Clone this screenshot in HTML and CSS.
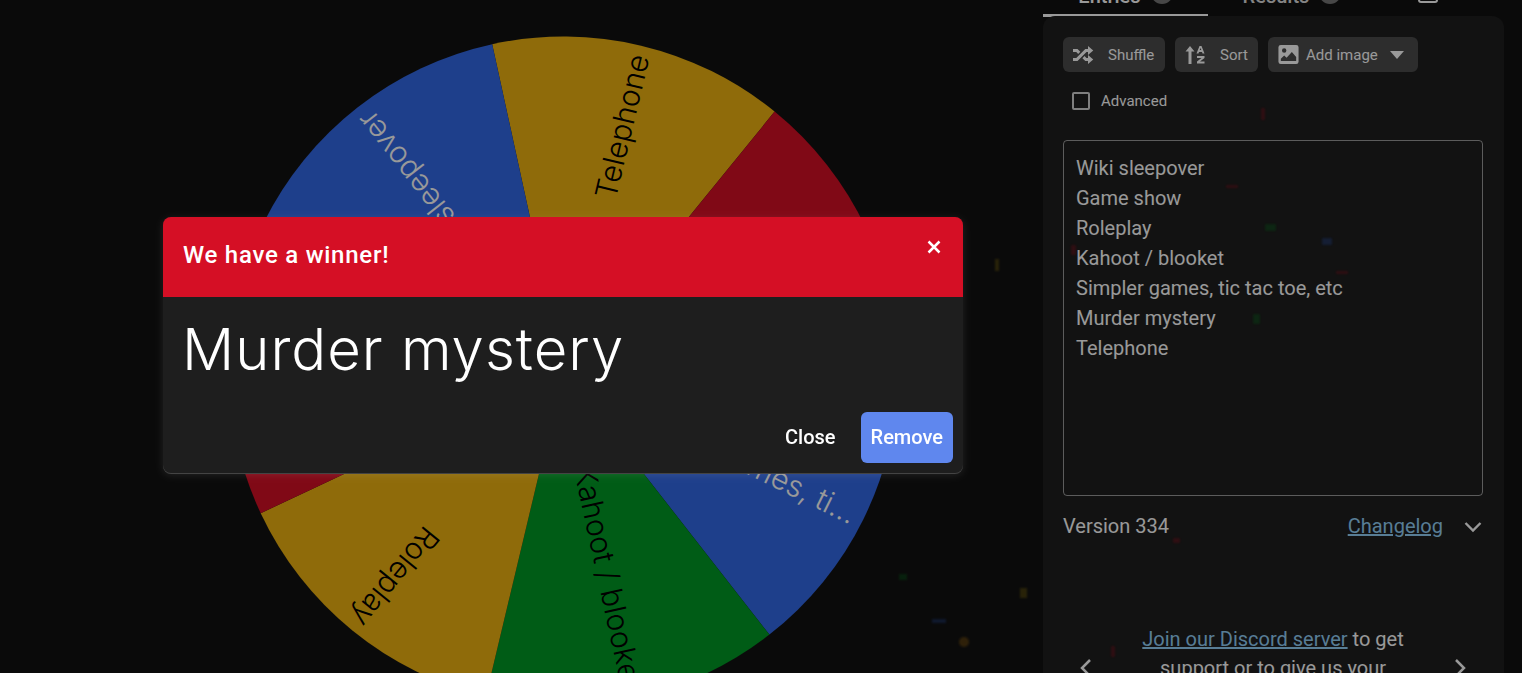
FILE: index.html
```html
<!DOCTYPE html>
<html lang="en">
<head>
<meta charset="utf-8">
<title>Wheel of Names</title>
<link rel="stylesheet" href="styles.css">
</head>
<body>
<div class="page">
  <main class="wheel-col">
    <svg class="wheel" viewBox="-563.5 -403 1043 760" width="1043" height="760" aria-label="Wheel">
      <path class="s-gold" d="M0 0L-71.3 -326.8A334.5 334.5 0 0 1 211.1 -259.4Z"/>
      <path class="s-red" d="M0 0L211.1 -259.4A334.5 334.5 0 0 1 334.5 3.3Z"/>
      <path class="s-blue" d="M0 0L334.5 3.3A334.5 334.5 0 0 1 205.9 263.6Z"/>
      <path class="s-green" d="M0 0L205.9 263.6A334.5 334.5 0 0 1 -77.6 325.4Z"/>
      <path class="s-gold" d="M0 0L-77.6 325.4A334.5 334.5 0 0 1 -302.8 142.2Z"/>
      <path class="s-red" d="M0 0L-302.8 142.2A334.5 334.5 0 0 1 -300 -148Z"/>
      <path class="s-blue" d="M0 0L-300 -148A334.5 334.5 0 0 1 -71.3 -326.8Z"/>
      <text class="w-text" transform="rotate(-76.6)" x="325" y="0">Telephone</text>
      <text class="w-text" transform="rotate(-25.15)" x="325" y="0">Murder mystery</text>
      <text class="w-text w-light" transform="rotate(26.3)" x="325" y="0">Simpler games, ti...</text>
      <text class="w-text" transform="rotate(77.7)" x="325" y="0">Kahoot / blooket</text>
      <text class="w-text" transform="rotate(129.1)" x="325" y="0">Roleplay</text>
      <text class="w-text" transform="rotate(180.55)" x="325" y="0">Game show</text>
      <text class="w-text w-light" transform="rotate(232)" x="325" y="0">Wiki sleepover</text>
    </svg>
  </main>

  <aside class="side">
    <div class="tabs">
      <div class="tab tab-active"><span>Entries</span><span class="badge">7</span></div>
      <div class="tab tab-results"><span>Results</span><span class="badge">0</span></div>
      <div class="tab tab-icon"><svg class="tab-glyph" viewBox="0 0 20 20"><rect x="1" y="1" width="18" height="18" rx="2"/></svg></div>
    </div>
    <section class="card">
      <div class="toolbar">
        <button class="btn btn-shuffle"><svg class="ico" viewBox="0 0 24 24"><path d="M17 3L22.25 7.5L17 12L22.25 16.5L17 21V18H14.26L11.44 15.18L13.56 13.06L15.5 15H17V9H15.5L6.5 18H2V15H5.26L14.26 6H17V3M2 6H6.5L9.32 8.82L7.2 10.94L5.26 9H2V6Z"/></svg><span>Shuffle</span></button>
        <button class="btn btn-sort"><svg class="ico" viewBox="0 0 20 20"><path d="M5 1L9.500 6.500H6.500V19H3.500V6.500H.5ZM11.500 8.500L14.500 1H16.500L19.500 8.500H17.500L17 7H14L13.500 8.500ZM14.700 5H16.300L15.500 3ZM12 11H19.500V13L15 16.500H19.500V18.500H12V16.500L16.500 13H12Z" fill-rule="evenodd"/></svg><span>Sort</span></button>
        <button class="btn btn-image"><svg class="ico" viewBox="0 0 24 24"><path fill-rule="evenodd" d="M4 2H20A2.5 2.5 0 0 1 22.500 4.500V19.500A2.500 2.500 0 0 1 20 22H4A2.500 2.500 0 0 1 1.500 19.500V4.500A2.500 2.500 0 0 1 4 2ZM7.500 5.500A2.300 2.300 0 1 0 7.500 10.100A2.300 2.300 0 1 0 7.500 5.500ZM4 18.800H20V14.500L15.500 9.500L10 15.500L7.500 13L4 16.500Z"/></svg><span>Add image</span><svg class="caret" viewBox="0 0 14 8"><path d="M0 0H14L7 8Z"/></svg></button>
      </div>
      <label class="advanced"><span class="check"></span><span>Advanced</span></label>
      <div class="entries">
        <div>Wiki sleepover</div>
        <div>Game show</div>
        <div>Roleplay</div>
        <div>Kahoot / blooket</div>
        <div>Simpler games, tic tac toe, etc</div>
        <div>Murder mystery</div>
        <div>Telephone</div>
      </div>
      <div class="version">
        <span class="version-no">Version 334</span>
        <a class="link" href="#">Changelog</a>
        <svg class="chev" viewBox="0 0 18 12"><path d="M1.500 2L9 9.500L16.500 2"/></svg>
      </div>
      <div class="promo">
        <svg class="arrow" viewBox="0 0 12 20"><path d="M10 2L2 10L10 18"/></svg>
        <p class="promo-text"><a class="link" href="#">Join our Discord server</a> to get support or to give us your feedback</p>
        <svg class="arrow" viewBox="0 0 12 20"><path d="M2 2L10 10L2 18"/></svg>
      </div>
    </section>
  </aside>
</div>

<div class="confetti">
  <i class="bit c-y" style="left:995px;top:259px;width:4px;height:12px"></i>
  <i class="bit c-y" style="left:1020px;top:588px;width:7px;height:10px"></i>
  <i class="bit c-o" style="left:959px;top:637px;width:10px;height:10px"></i>
  <i class="bit c-b" style="left:932px;top:619px;width:14px;height:4px"></i>
  <i class="bit c-g" style="left:899px;top:574px;width:8px;height:6px"></i>
  <i class="bit c-r" style="left:1226px;top:185px;width:12px;height:3px"></i>
  <i class="bit c-g" style="left:1265px;top:224px;width:11px;height:7px"></i>
  <i class="bit c-b" style="left:1322px;top:238px;width:10px;height:7px"></i>
  <i class="bit c-r" style="left:1336px;top:271px;width:12px;height:3px"></i>
  <i class="bit c-g" style="left:1253px;top:314px;width:7px;height:10px"></i>
  <i class="bit c-r" style="left:1071px;top:245px;width:5px;height:10px"></i>
  <i class="bit c-r" style="left:1261px;top:108px;width:4px;height:12px"></i>
  <i class="bit c-r" style="left:1173px;top:538px;width:7px;height:5px"></i>
  <i class="bit c-r" style="left:1111px;top:646px;width:4px;height:11px"></i>
</div>

<div class="scrim"></div>

<div class="dialog" role="dialog">
  <header class="dialog-head">
    <h2 class="dialog-title">We have a winner!</h2>
    <svg class="dialog-x" viewBox="0 0 14 14"><path d="M1.500 1.500L12.500 12.500M12.500 1.500L1.500 12.500"/></svg>
  </header>
  <div class="dialog-body">Murder mystery</div>
  <footer class="dialog-foot">
    <button class="d-btn">Close</button>
    <button class="d-btn d-primary">Remove</button>
  </footer>
</div>
</body>
</html>
```
FILE: styles.css
```css
* { box-sizing: border-box; }
html, body { margin: 0; height: 100%; overflow: hidden; background: #121212; }
body { font-family: Roboto, "Liberation Sans", sans-serif; color: #fff; }

.page { display: grid; grid-template-columns: 1043px 461px; margin-top: -32px; height: 705px; overflow: hidden; }

.wheel-col { height: 705px; overflow: hidden; }
.wheel { display: block; }
.s-gold { fill: #eeb211; }
.s-red { fill: #d50f25; }
.s-blue { fill: #3369e8; }
.s-green { fill: #009925; }
.w-text { font-family: Inter, sans-serif; font-size: 30px; font-weight: 300; fill: #000; text-anchor: end; dominant-baseline: central; }
.w-light { fill: #fff; }

.side { display: flex; flex-direction: column; }
.tabs { display: flex; height: 49px; }
.tab { width: 165px; height: 49px; display: flex; align-items: flex-end; justify-content: center; gap: 10px; font-size: 20px; line-height: 23px; font-weight: 500; color: #ddd; padding-bottom: 6px; border-bottom: 3px solid transparent; }
.tab-active { border-bottom-color: #fff; color: #fff; }
.tab-results { padding-left: 3px; }
.tab-icon { width: 110px; }
.tab-glyph { width: 20px; height: 20px; margin-bottom: 5px; fill: none; stroke: #fff; stroke-width: 2; }
.badge { width: 22px; height: 22px; margin-bottom: 4px; border-radius: 50%; background: #777; font-size: 13px; line-height: 22px; text-align: center; }

.card { background: #1e1e1e; border-radius: 12px; margin-top: -1px; padding: 21px 21px 0 20px; height: 720px; }
.toolbar { display: flex; gap: 10px; }
.btn { height: 35px; border: 0; border-radius: 6px; background: #4b4b4b; color: #fff; display: flex; align-items: center; font-family: inherit; font-size: 15px; font-weight: 400; padding: 0 10px; }
.btn-shuffle { width: 102px; gap: 13px; }
.btn-sort { width: 83px; gap: 15px; }
.btn-image { width: 150px; gap: 6px; }
.ico { width: 20px; height: 20px; fill: #fff; flex: none; }
.btn-shuffle .ico { width: 24px; height: 24px; margin-left: -2px; }
.btn-image .ico { width: 23px; height: 23px; margin-left: -1px; }
.caret { width: 14px; height: 8px; fill: #fff; margin-left: 6px; }
.advanced { display: flex; align-items: center; gap: 11px; font-size: 15px; margin: 20px 0 0 9px; height: 18px; }
.check { width: 18px; height: 18px; border: 2px solid #fff; border-radius: 2px; opacity: .8; }

.entries { margin-top: 30px; height: 356px; border: 1px solid rgba(255,255,255,.55); border-radius: 4px; padding: 12px; font-size: 20px; line-height: 30px; }

.version { display: flex; align-items: center; height: 30px; margin-top: 15px; padding-right: 1px; font-size: 20px; }
.version-no { flex: 1; }
.link { color: #93d0f8; text-decoration: underline; }
.chev { width: 18px; height: 12px; margin: 2px 0 0 21px; fill: none; stroke: #fff; stroke-width: 2.400; }

.promo { display: flex; align-items: flex-start; justify-content: space-between; margin-top: 84px; padding: 0 17px; }
.promo-text { width: 300px; margin: 0; text-align: center; font-size: 20px; line-height: 29px; }
.arrow { width: 12px; height: 20px; fill: none; stroke: #fff; stroke-width: 2.500; margin-top: 33px; }

.confetti { position: fixed; inset: 0; }
.bit { position: absolute; opacity: .28; filter: blur(1.2px); }
.c-y { background: #c9a40d; }
.c-o { background: #ee9a11; border-radius: 50%; }
.c-b { background: #3369e8; }
.c-g { background: #009925; }
.c-r { background: #d50f25; }

.scrim { position: fixed; inset: 0; background: rgba(0,0,0,.4); }

.dialog { position: fixed; left: 163px; top: 217px; width: 800px; height: 256px; background: #1e1e1e; border-radius: 8px; overflow: hidden; display: flex; flex-direction: column; box-shadow: 0 1px 0 #444, 0 2px 8px rgba(255,255,255,.1); }
.dialog-head { height: 80px; background: #d50f25; display: flex; justify-content: space-between; padding: 0 22px 0 20px; flex: none; }
.dialog-title { margin: 0; font-size: 24px; font-weight: 500; line-height: 77px; letter-spacing: .75px; }
.dialog-x { width: 14px; height: 14px; margin-top: 23px; fill: none; stroke: #fff; stroke-width: 2.500; }
.dialog-body { font-family: Inter, sans-serif; font-weight: 300; font-size: 58px; letter-spacing: 1px; line-height: 80px; padding: 12px 19px 0; flex: 1; }
.dialog-foot { display: flex; justify-content: flex-end; align-items: center; gap: 15px; padding: 0 10px 10px; }
.d-btn { height: 51px; border: 0; background: none; color: #fff; font-family: inherit; font-size: 20px; font-weight: 500; padding: 0 10px 2px; border-radius: 6px; }
.d-primary { background: #5f87ee; }
```
